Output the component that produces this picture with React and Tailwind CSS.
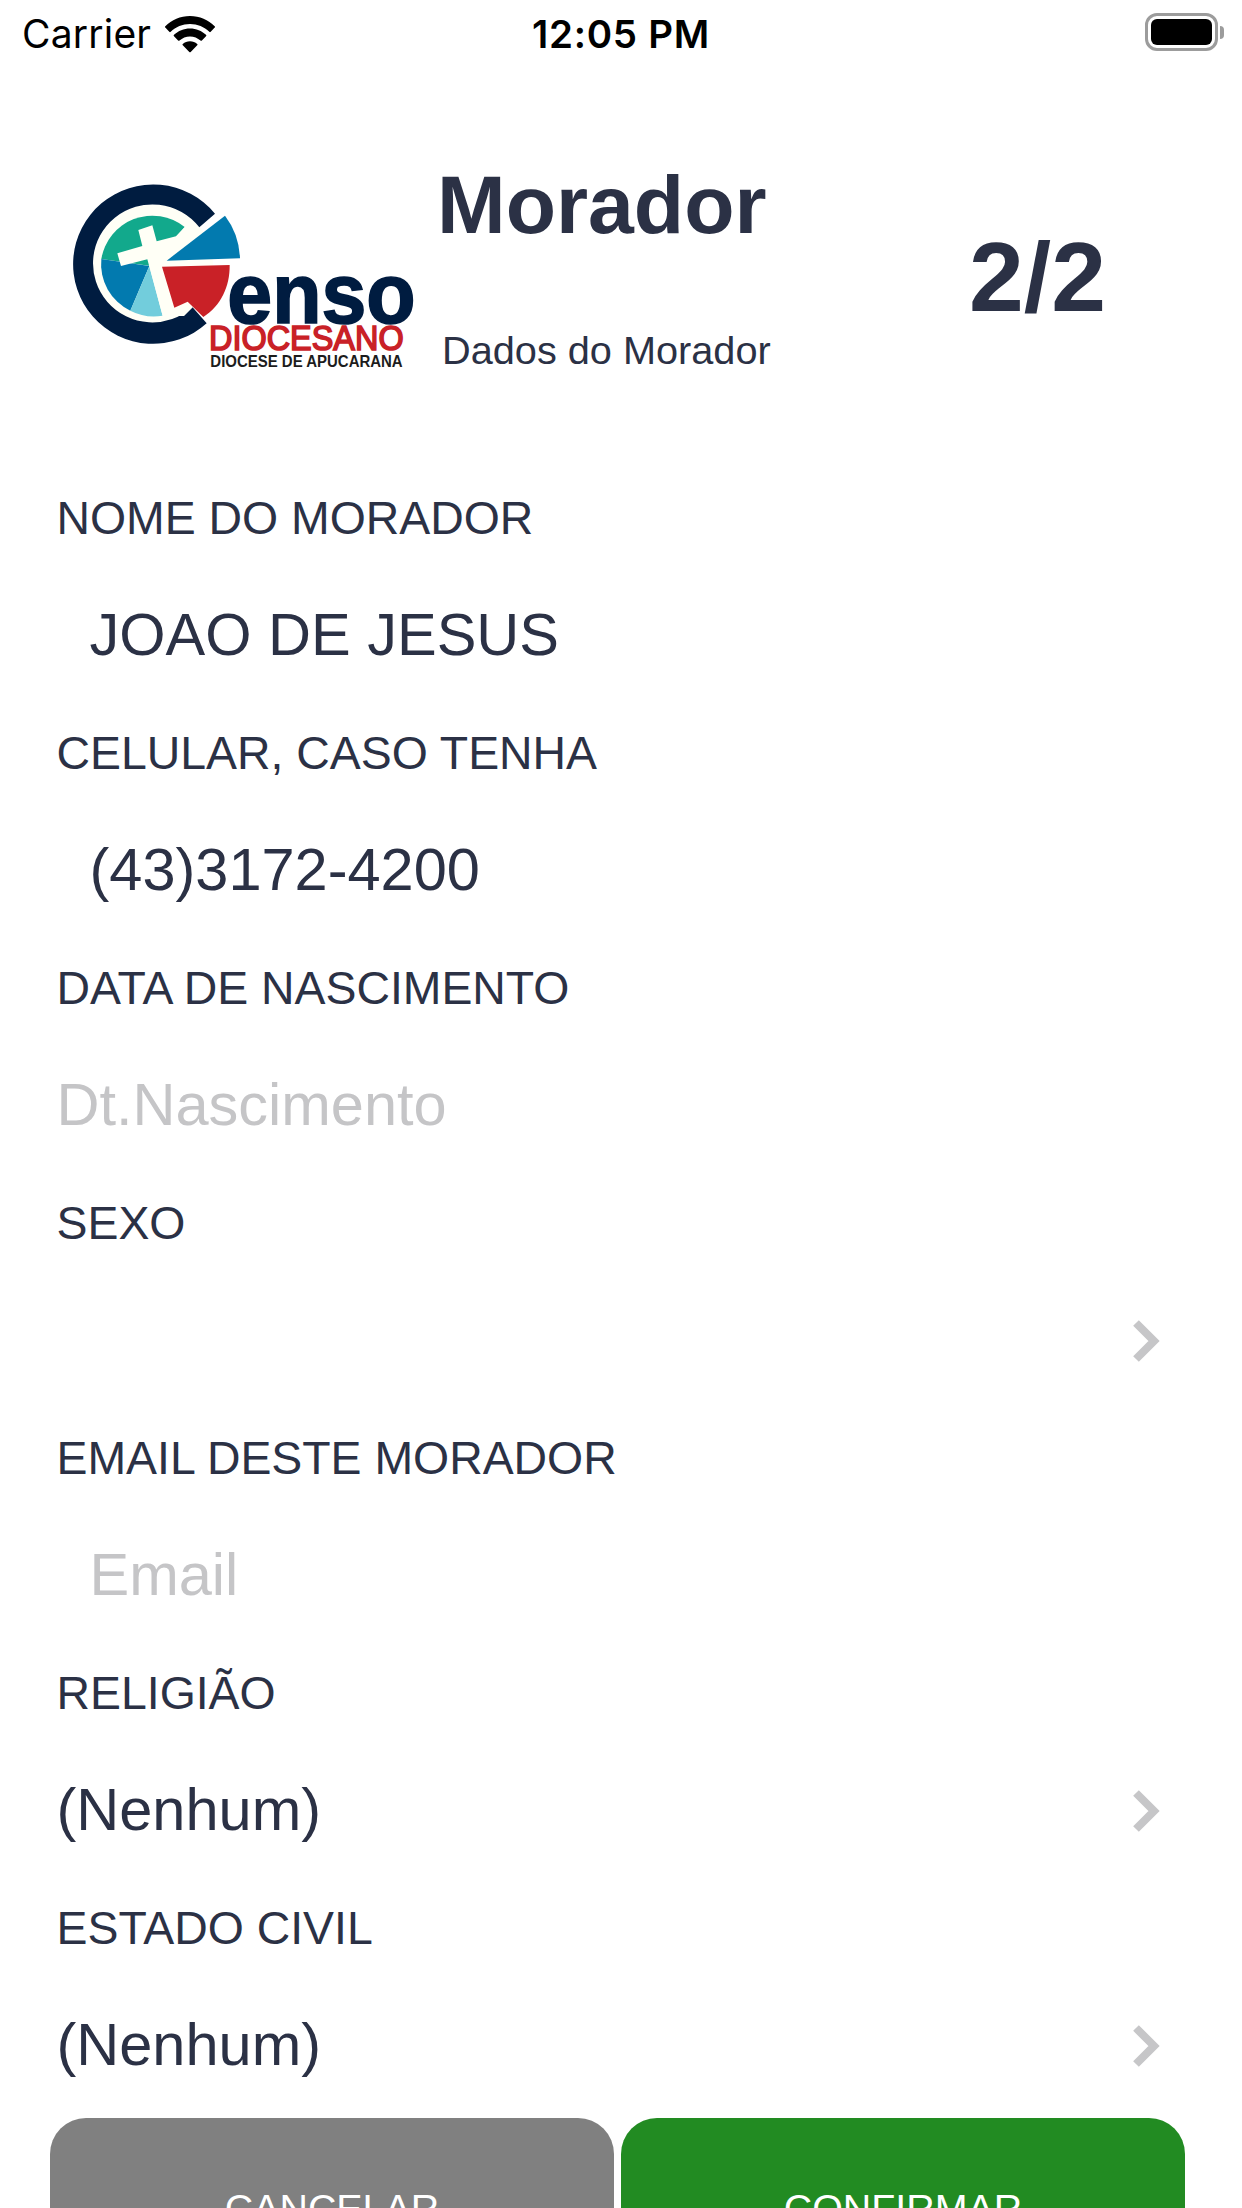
import { useState } from "react"

const StatusBar = () => (
  <div className="flex h-[66px] items-start justify-between font-['Inter',sans-serif] text-black">
    <div className="flex w-[400px] items-center gap-[14px] pl-[22px]">
      <span className="text-[39px] leading-[68px] tracking-[0.2px]">Carrier</span>
      <svg className="h-[37px] w-[50px]" viewBox="0 0 50 37">
        <path d="M25 0C15.400 0 6.600 3.800 0.300 10.200a1 1 0 0 0 0 1.400l4 4.200a1 1 0 0 0 1.400 0C10.700 10.900 17.500 8 25 8s14.300 2.900 19.300 7.800a1 1 0 0 0 1.400 0l4-4.200a1 1 0 0 0 0-1.400C43.400 3.800 34.600 0 25 0z" />
        <path d="M25 12.500c-6.200 0-11.800 2.400-16 6.300a1 1 0 0 0 0 1.500l4.100 4.200a1 1 0 0 0 1.400 0C17.300 22 21 20.400 25 20.400s7.700 1.600 10.500 4.100a1 1 0 0 0 1.400 0l4.100-4.200a1 1 0 0 0 0-1.500c-4.200-3.900-9.800-6.300-16-6.300z" />
        <path d="M25 25.200c-2.800 0-5.300 1-7.200 2.700a.9.9 0 0 0 0 1.400l6.500 6.700a1 1 0 0 0 1.400 0l6.500-6.700a.9.9 0 0 0 0-1.400c-1.900-1.700-4.400-2.700-7.200-2.700z" />
      </svg>
    </div>
    <span className="text-[38.500px] font-semibold leading-[68px] tracking-[0.700px]">12:05 PM</span>
    <div className="flex w-[400px] items-center justify-end gap-[2px] pr-[18px] pt-[13px]">
      <div className="h-[38px] w-[73px] rounded-[12px] border-[3px] border-[#9c9c9c] p-[3px]">
        <div className="h-full w-full rounded-[6px] bg-black" />
      </div>
      <div className="h-[13px] w-[4px] rounded-r-full bg-[#9c9c9c]" />
    </div>
  </div>
)

const Logo = () => (
  <svg
    className="h-[210px] w-[370px] shrink-0"
    viewBox="0 0 1110 630"
    fontFamily="'Liberation Sans', Arial, sans-serif"
  >
    <circle cx="279" cy="283" r="180" fill="#fffff6" />
    {/* outer C ring */}
    <path d="M465 131A240 239 0 1 0 440 460L397 411A178 177 0 1 1 418 172Z" fill="#001c40" />

    {/* pie inside the ring */}
    <path d="M267 287L124 267A155 155 0 0 1 374 171L348 200Z" fill="#12a98c" />
    <path d="M268 288L124 267A155 155 0 0 0 211 422Z" fill="#027aaf" />
    <path d="M268 288L211 422A155 155 0 0 0 308 437Z" fill="#72cddc" />

    {/* cross */}
    <path
      d="M235 180L277 166L290 214L348 199L374 172L418 173L320 272L306 290L343 413L385 395L399 411L372 438L308 438L262 268L183 288L172 250L247 228Z"
      fill="#fffff6"
    />
    <path d="M320 272L495 137Q537 192 540 265Z" fill="#027aaf" />
    <path d="M306 290L509 285C510 350 482 408 430 441L383 395L343 413Z" fill="#c92127" />

    <text
      x="502"
      y="459"
      fontSize="254"
      fontWeight="700"
      fill="#001c40"
      stroke="#001c40"
      strokeWidth="5"
      textLength="565"
      lengthAdjust="spacingAndGlyphs"
    >
      enso
    </text>
    <text
      x="447"
      y="541"
      fontSize="106"
      fill="#c92127"
      stroke="#c92127"
      strokeWidth="5"
      textLength="584"
      lengthAdjust="spacingAndGlyphs"
    >
      DIOCESANO
    </text>
    <text
      x="451"
      y="591"
      fontSize="47"
      fontWeight="700"
      fill="#1c1c1c"
      textLength="577"
      lengthAdjust="spacingAndGlyphs"
    >
      DIOCESE DE APUCARANA
    </text>
  </svg>
)

const Header = () => (
  <header className="flex h-[394px] items-start pl-[60px] pt-[104px]">
    <Logo />
    <div className="flex w-[534px] flex-col pl-[7px]">
      <h1 className="mt-[-16px] text-[82.400px] font-bold leading-[100px]">Morador</h1>
      <p className="mt-[71px] pl-[5px] text-[39.700px] leading-[50px]">Dados do Morador</p>
    </div>
    <span className="mt-[47px] pl-[5px] text-[98.500px] font-bold leading-[120px]">2/2</span>
  </header>
)

const Chevron = () => (
  <svg className="mt-[2px] h-[42px] w-[27px]" viewBox="0 0 27 42" fill="none">
    <path d="M3 3L21 21L3 39" stroke="#c6c6c8" strokeWidth="8" />
  </svg>
)

const Field = ({ label, children }) => (
  <div className="h-[235px]">
    <label className="block h-[116px] text-[46.400px] leading-[117px]">{label}</label>
    <div className="flex h-[117px] items-center">{children}</div>
  </div>
)

const TextInput = ({ indent, ...props }) => (
  <input
    className={`h-full w-full bg-transparent text-[59.500px] outline-none placeholder:text-[#c5c5c7] ${indent ? "pl-[33px]" : ""}`}
    {...props}
  />
)

const Picker = ({ value }) => (
  <button type="button" className="flex h-full w-full items-center justify-between pr-[26px] text-[59.500px]">
    <span>{value}</span>
    <Chevron />
  </button>
)

const App = () => {
  const [nome, setNome] = useState("JOAO DE JESUS")
  const [celular, setCelular] = useState("(43)3172-4200")
  const [nascimento, setNascimento] = useState("")
  const [email, setEmail] = useState("")

  return (
    <div className="h-[2208px] w-[1242px] overflow-hidden bg-white font-['Liberation_Sans',Arial,sans-serif] text-[#2b3145]">
      <StatusBar />
      <Header />

      <form>
        <div className="pl-[56.500px] pr-[56px]">
          <Field label="NOME DO MORADOR">
            <TextInput indent value={nome} onChange={(e) => setNome(e.target.value)} />
          </Field>
          <Field label="CELULAR, CASO TENHA">
            <TextInput indent value={celular} onChange={(e) => setCelular(e.target.value)} />
          </Field>
          <Field label="DATA DE NASCIMENTO">
            <TextInput
              placeholder="Dt.Nascimento"
              value={nascimento}
              onChange={(e) => setNascimento(e.target.value)}
            />
          </Field>
          <Field label="SEXO">
            <Picker value="" />
          </Field>
          <Field label="EMAIL DESTE MORADOR">
            <TextInput indent placeholder="Email" value={email} onChange={(e) => setEmail(e.target.value)} />
          </Field>
          <Field label="RELIGIÃO">
            <Picker value="(Nenhum)" />
          </Field>
          <Field label="ESTADO CIVIL">
            <Picker value="(Nenhum)" />
          </Field>
        </div>

        <div className="mt-[13px] flex gap-[7px] pl-[50px] pr-[57px] text-[39.400px] text-white">
          <button type="button" className="h-[181px] flex-1 rounded-[36px] bg-[#808080]">
            CANCELAR
          </button>
          <button type="button" className="h-[181px] flex-1 rounded-[36px] bg-[#228b22]">
            CONFIRMAR
          </button>
        </div>
      </form>
    </div>
  )
}

export default App
